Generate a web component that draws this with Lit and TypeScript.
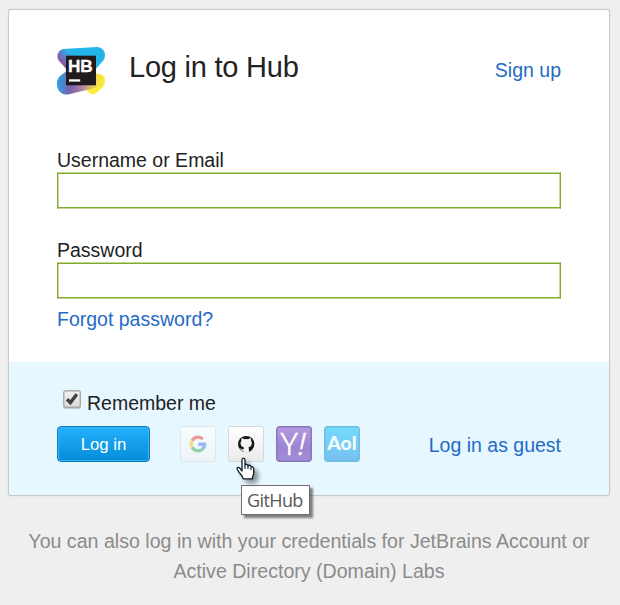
import { LitElement, html, css, svg } from "lit";
import { customElement, property } from "lit/decorators.js";

const hubLogo = svg`
  <defs>
    <linearGradient id="top" x1="4" y1="20" x2="17" y2="5" gradientUnits="userSpaceOnUse">
      <stop offset="0" stop-color="#8f50a5"/><stop offset=".3" stop-color="#8060ae"/>
      <stop offset=".85" stop-color="#25b4ea"/>
    </linearGradient>
    <linearGradient id="low" x1="0" y1="32" x2="46" y2="36" gradientUnits="userSpaceOnUse">
      <stop offset="0" stop-color="#20a7e5"/><stop offset=".3" stop-color="#7d5fae"/>
      <stop offset=".55" stop-color="#aa849f"/><stop offset=".85" stop-color="#f2d94b"/><stop offset="1" stop-color="#fbea3d"/>
    </linearGradient>
  </defs>
  <path fill="#fcec3c" d="M38 27H42.500C46 27 48 30 48 34C48 37 47 39 45 41L39 46C36.500 48 33.500 47.500 31 44.500L25 38Z"/>
  <path fill="url(#low)" d="M11 23L3 29C-1 33-.5 38 1 42C3 46 7 48.500 12 47.300L40 40.500C45 39 48 36 47.500 31L42 27Z"/>
  <path fill="url(#top)" d="M6 2L40 0C45 0 48 4 48 8C48 11 47 13 45 15L36 25L12 25L3 15C-1 11-.5 4 6 2Z"/>
  <rect x="9" y="8.700" width="30" height="29.600" fill="#201a1c"/>
  <text class="hb" x="10.900" y="25">HB</text>
  <rect x="12" y="32.300" width="11.200" height="2.300" fill="#fff"/>`;

@customElement("provider-button")
class ProviderButton extends LitElement {
  @property() kind = "";
  static styles = css`
    :host { display: block; width: 36px; height: 36px; }
    svg { display: block; overflow: visible; }
    .y, .bang { font: 300 32px/1 "Open Sans", sans-serif; fill: #fff; stroke: #fff; stroke-width: .6px; }
    .bang { font-style: italic; }
    .aol { font: 900 18.500px Lato, sans-serif; fill: #f5fcff; }
  `;
  private icon() {
    switch (this.kind) {
      case "google":
        return svg`
          <rect x=".5" y=".5" width="35" height="35" rx="1.500" fill="url(#g)" stroke="#dfe7eb"/>
          <g fill="none" stroke-width="3.400">
            <path d="M12.200 14.700A6.600 6.600 0 0 1 22.800 13.100" stroke="#ef9a95"/>
            <path d="M12.200 21.200A6.600 6.600 0 0 1 12.200 14.700" stroke="#f9dc8b"/>
            <path d="M22.300 23.200A6.600 6.600 0 0 1 12.200 21.200" stroke="#92d0a6"/>
            <path d="M18.300 18.200H24.600A6.600 6.600 0 0 1 22.300 23.200" stroke="#96b9f3"/>
          </g>`;
      case "github":
        return svg`
          <rect x=".5" y=".5" width="35" height="35" rx="1.500" fill="url(#h)" stroke="#d7d9dc"/>
          <circle cx="18.200" cy="18.100" r="8.200" fill="#171717"/>
          <path fill="#f5f5f5" d="M13.600 12.200C14.600 12.100 15.600 12.700 16.300 13.200Q18.200 12.700 20.100 13.200C20.800 12.700 21.800 12.100 22.800 12.200Q23.300 13.400 22.900 14.500C24.500 16.500 24 19.500 22 20.800Q21.200 21.300 20.200 21.500Q20.900 22.200 20.900 23.300V26.600H15.500V24.800C13.500 25.200 13 24 12.500 23.200L11.800 22.500C13 22 13.600 23.800 15.500 23.400Q15.500 22.100 16.200 21.500Q15.200 21.300 14.400 20.800C12.400 19.500 11.900 16.500 13.500 14.500Q13.100 13.400 13.600 12.200Z"/>`;
      case "yahoo":
        return svg`
          <rect x=".7" y=".7" width="34.600" height="34.600" rx="3" fill="url(#y)" stroke="#8b75b9" stroke-width="1.400"/>
          <text class="y" x="4.700" y="29.200">Y</text>
          <text class="bang" x="22" y="29.200">!</text>`;
      default:
        return svg`
          <rect x=".7" y=".7" width="34.600" height="34.600" rx="3" fill="url(#a)" stroke="#6fbfe3" stroke-width="1.400"/>
          <text class="aol" x="3.200" y="24" textLength="29.500" lengthAdjust="spacingAndGlyphs">Aol</text>`;
    }
  }
  render() {
    return html`<svg width="36" height="36" viewBox="0 0 36 36">
      <defs>
        <linearGradient id="g" x2="0" y2="1"><stop stop-color="#f7fcff"/><stop offset="1" stop-color="#edf3f6"/></linearGradient>
        <linearGradient id="h" x2="0" y2="1"><stop stop-color="#fff"/><stop offset="1" stop-color="#eaeaeb"/></linearGradient>
        <linearGradient id="y" x2="0" y2="1"><stop stop-color="#b59be0"/><stop offset=".6" stop-color="#9c84cf"/><stop offset="1" stop-color="#a28ed8"/></linearGradient>
        <linearGradient id="a" x2="0" y2="1"><stop stop-color="#74dafc"/><stop offset="1" stop-color="#78bff0"/></linearGradient>
      </defs>${this.icon()}</svg>`;
  }
}

@customElement("app-root")
class AppRoot extends LitElement {
  static styles = css`
    :host {
      display: flex; flex-direction: column; box-sizing: border-box;
      width: 620px; height: 605px; padding: 9px 10px 0 8px;
      background: #efefef; overflow: hidden; position: relative;
      font: 19.500px/30px "Liberation Sans", Arial, sans-serif; color: #222;
    }
    * { box-sizing: border-box; }
    .card {
      height: 487px; border: 1px solid #c8c8c8; border-radius: 3px; box-shadow: 0 0 1px #bbb;
      background: #fff; display: flex; flex-direction: column; overflow: hidden;
    }
    .main { height: 352px; padding: 37px 48px 0; }
    header { display: flex; height: 48px; align-items: flex-start; }
    .logo { width: 48px; height: 48px; overflow: visible; }
    .hb { font: 700 17.200px "Liberation Sans", Arial, sans-serif; fill: #fff; stroke: #fff; stroke-width: .35px; }
    h1 { margin: 3px 0 0 24px; font-size: 29px; letter-spacing: -.22px; line-height: 34px; font-weight: 400; flex: 1; }
    a { color: #1f6bc6; text-decoration: none; }
    .signup { margin-top: 8px; }
    .field { display: block; }
    .user { margin-top: 49px; }
    .pass { margin-top: 25px; }
    .field span { display: block; height: 28px; line-height: 33px; }
    input[type="text"], input[type="password"] {
      display: block; width: 504px; height: 37px;
      border: 1px solid; border-color: #c2d79b #7fa928;
      box-shadow: inset 0 1px #7fa928, inset 0 -1px #7fa928, inset 1px 0 #c8dba6, inset -1px 0 #c8dba6;
      background: #fff; outline: 0; padding: 0 8px; font: inherit; border-radius: 0;
    }
    .forgot { display: block; margin-top: 5px; }
    .foot { flex: 1; background: #e7f7ff; padding: 26px 48px 0; }
    .remember { display: flex; height: 38px; padding-left: 6px; gap: 6px; }
    .check { width: 18px; height: 20px; margin-top: 2px; overflow: visible; }
    .actions { display: flex; }
    .login {
      width: 93px; height: 36px; padding: 1px 0 0; border: 1px solid #057fc0; border-radius: 4px;
      background: linear-gradient(#24b1fd, #058cd8); box-shadow: inset 0 0 0 1px #3fb0ec;
      color: #fff; font: 16.800px "Liberation Sans", Arial, sans-serif;
    }
    .providers { display: flex; gap: 12px; margin-left: 30px; }
    .guest { margin-left: auto; margin-top: 4px; }
    .note { margin: 30px 0 0; text-align: center; color: #8b8b8b; font-size: 19.600px; }
    .tip {
      position: absolute; left: 241px; top: 485px; width: 69px; height: 30px;
      border: 1px solid #707070; background: #fff; box-shadow: 3px 3px 2px #0007;
      padding-left: 5px; white-space: nowrap;
      font: 18px/29px "Open Sans", sans-serif; letter-spacing: -.6px; color: #575757;
    }
    .cursor { position: absolute; left: 236px; top: 457px; filter: drop-shadow(4px 4px 2px #0006); }
  `;
  render() {
    return html`
      <section class="card">
        <div class="main">
          <header>
            <svg class="logo" viewBox="0 0 48 48">${hubLogo}</svg>
            <h1>Log in to Hub</h1>
            <a class="signup">Sign up</a>
          </header>
          <label class="field user"><span>Username or Email</span><input type="text"></label>
          <label class="field pass"><span>Password</span><input type="password"></label>
          <a class="forgot">Forgot password?</a>
        </div>
        <div class="foot">
          <div class="remember">
            <svg class="check" viewBox="0 0 18 20">
              <defs><linearGradient id="c" x2="0" y2="1"><stop stop-color="#f0f0f0"/><stop offset="1" stop-color="#dcdcdc"/></linearGradient></defs>
              <rect x=".8" y="1.800" width="16.500" height="16.500" rx="2" fill="none" stroke="#bccad1" stroke-width="1.500"/>
              <rect x=".8" y=".8" width="16.500" height="16.500" rx="2" fill="url(#c)" stroke="#a9a9a9" stroke-width="1.400"/>
              <path d="M4 9.200L7.400 12.600L13.800 4.300" fill="none" stroke="#414141" stroke-width="3.400"/>
            </svg>
            <span>Remember me</span>
          </div>
          <div class="actions">
            <button class="login">Log in</button>
            <div class="providers">
              ${["google", "github", "yahoo", "aol"].map((k) => html`<provider-button .kind=${k}></provider-button>`)}
            </div>
            <a class="guest">Log in as guest</a>
          </div>
        </div>
      </section>
      <p class="note">You can also log in with your credentials for JetBrains Account or<br>Active Directory (Domain) Labs</p>
      <div class="tip">GitHub</div>
      <svg class="cursor" width="19" height="24" viewBox="0 0 19 24">
        <path fill="#fff" stroke="#101725" stroke-width="1.300" stroke-linejoin="round" d="M6 14V3C6 .4 9 .4 9 3V8C9.500 6.800 12 7 12 9C12.700 7.700 15 8.200 15 10C16 9.200 17.700 10 17.700 12V16C17.700 18 16.300 19 16.300 21.800H7.200C7 19 4 17 2.500 14.500L1.300 12.500C.3 10.500 2.500 9.700 3.800 11.200Z"/>
        <path stroke="#101725" stroke-width="1.100" d="M9 8V12M12 9V12M15 10.500V13"/>
      </svg>`;
  }
}
